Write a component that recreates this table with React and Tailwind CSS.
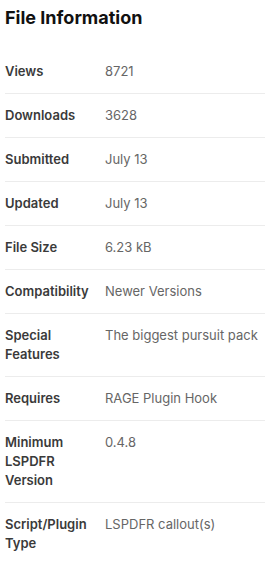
const rows = [
    { label: 'Views', value: '8721' },
    { label: 'Downloads', value: '3628' },
    { label: 'Submitted', value: 'July 13' },
    { label: 'Updated', value: 'July 13' },
    { label: 'File Size', value: '6.23 kB' },
    { label: 'Compatibility', value: 'Newer Versions' },
    { label: 'Special Features', value: 'The biggest pursuit pack' },
    { label: 'Requires', value: 'RAGE Plugin Hook' },
    { label: 'Minimum LSPDFR Version', value: '0.4.8' },
    { label: 'Script/Plugin Type', value: 'LSPDFR callout(s)' },
];

export default function App() {
    return (
        <div className="bg-white pl-[5px] pr-[13px] pt-[6px] font-['Inter',sans-serif]">
            {/* Header */}
            <h2 className="text-[18px] leading-[24px] font-bold text-[#111111] mb-[20px]">File Information</h2>

            {/* Rows */}
            <dl>
                {rows.map((row, i) => (
                    <div
                        key={row.label}
                        className={`flex py-[12px] text-[13px] leading-[19px] ${i < rows.length - 1 ? 'border-b border-[#ececec]' : ''}`}
                    >
                        <dt className="w-[100px] shrink-0 pr-[8px] font-semibold text-[#3a3a3a]">{row.label}</dt>
                        <dd className="text-[#666666]">{row.value}</dd>
                    </div>
                ))}
            </dl>
        </div>
    );
}
